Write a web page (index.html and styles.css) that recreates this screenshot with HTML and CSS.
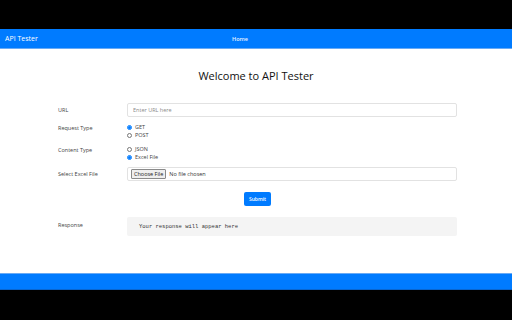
FILE: index.html
```html
<!DOCTYPE html>
<html lang="en">
<head>
  <meta charset="UTF-8" />
  <title>API Tester</title>
  <link rel="stylesheet" href="styles.css">
</head>
<body>
  <div class="frame">
    <nav class="navbar">
      <span class="brand">API Tester</span>
      <a class="nav-link" href="#">Home</a>
    </nav>

    <main class="content">
      <h1>Welcome to API Tester</h1>

      <form class="form">
        <div class="row row-url">
          <label class="label">URL</label>
          <input class="text-input" type="text" placeholder="Enter URL here">
        </div>

        <div class="row row-radio">
          <span class="label">Request Type</span>
          <div class="options">
            <label class="option"><input type="radio" name="method" checked> GET</label>
            <label class="option"><input type="radio" name="method"> POST</label>
          </div>
        </div>

        <div class="row row-radio">
          <span class="label">Content Type</span>
          <div class="options">
            <label class="option"><input type="radio" name="ctype"> JSON</label>
            <label class="option"><input type="radio" name="ctype" checked> Excel File</label>
          </div>
        </div>

        <div class="row row-file">
          <span class="label">Select Excel File</span>
          <div class="file-box">
            <span class="file-btn">Choose File</span>
            <span class="file-name">No file chosen</span>
          </div>
        </div>

        <div class="actions">
          <button class="submit" type="button">Submit</button>
        </div>

        <div class="row row-response">
          <span class="label">Response</span>
          <pre class="response">Your response will appear here</pre>
        </div>
      </form>
    </main>

    <footer class="footer"></footer>
  </div>
</body>
</html>
```

FILE: styles.css
```css
:root {
  --blue: #007bff;
  --line: #69aaf5;
  --text: #333;
  --sans: 'Open Sans', 'Noto Sans', sans-serif;
  --mono: 'Liberation Mono', 'DejaVu Sans Mono', monospace;
}
* { margin:0; padding:0; box-sizing:border-box; }
html, body { height:100%; }
body { background:#000; font-family:var(--sans); color:var(--text); }

.frame { padding:29px 0 30px; display:flex; flex-direction:column; height:100%; }

/* NAVBAR */
.navbar {
  height:20px; background:var(--blue); border-bottom:1px solid var(--line);
  display:flex; align-items:center; padding:0 5px;
}
.brand { color:#fff; font-size:7px; width:227px; }
.nav-link { color:#e8f1ff; font-size:5.5px; font-weight:600; text-decoration:none; }

/* MAIN */
.content { flex:1; background:#fff; padding-top:19px; }
h1 { font-size:11px; font-weight:400; color:#111; text-align:center; margin-bottom:20px; line-height:15px; }

.form { width:399px; margin-left:58px; font-size:5.5px; }
.row { display:grid; grid-template-columns:69px 1fr; align-items:center; }
.label { color:#444; font-size:5.5px; }

.row-url { height:14px; margin-bottom:6px; }
.text-input {
  height:14px; border:1px solid #e2e2e2; border-radius:2px;
  padding:0 5px; font:5.5px var(--sans); color:#333;
}
.text-input::placeholder { color:#8a8a8a; }

.row-radio { align-items:start; margin-bottom:6px; }
.row-radio .label { line-height:8px; padding-top:1px; }
.options { display:flex; flex-direction:column; }
.option { display:flex; align-items:center; gap:3px; line-height:8px; color:#444; }
.option input { width:5px; height:5px; margin:0; accent-color:var(--blue); }

.row-file { height:14px; margin-top:4px; margin-bottom:11px; }
.file-box {
  height:14px; border:1px solid #e2e2e2; border-radius:2px;
  display:flex; align-items:center; padding-left:3px; gap:3px;
}
.file-btn {
  font-size:5.5px; color:#222; background:#efefef; border:1px solid #8a8a8a;
  border-radius:1px; padding:0 2px; line-height:8px;
}
.file-name { font-size:5.5px; color:#333; }

.actions { display:flex; justify-content:center; margin-bottom:11px; }
.submit {
  width:27px; height:14px; background:var(--blue); color:#fff; border:none;
  border-radius:2px; font:600 5px var(--sans);
}

.row-response { height:19px; align-items:start; }
.row-response .label { padding-top:4px; }
.response {
  height:19px; background:#f4f4f4; font:5.5px var(--mono); color:#333;
  padding:0 12px; line-height:19px; border-radius:2px;
}

/* FOOTER */
.footer { height:17px; background:var(--blue); border-top:1px solid var(--line); border-bottom:1px solid #0a66cf; }
```
